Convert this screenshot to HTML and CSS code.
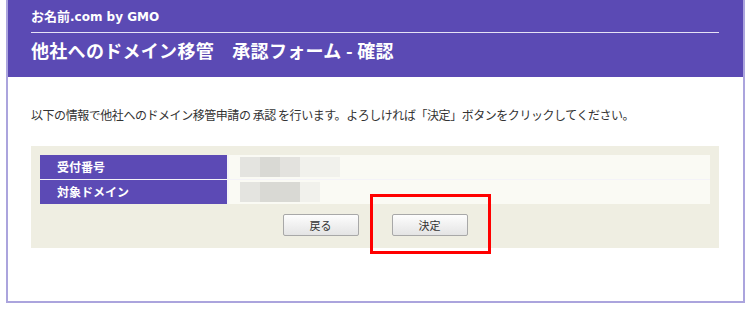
FILE: index.html
```html
<!DOCTYPE html>
<html lang="ja">
<head>
  <meta charset="UTF-8">
  <title>他社へのドメイン移管 承認フォーム - 確認</title>
  <link rel="stylesheet" href="styles.css">
</head>
<body>
  <div class="frame">
    <div class="header">
      <div class="brand">お名前<span class="latin">.com by GMO</span></div>
      <h1>他社へのドメイン移管　承認フォーム - 確認</h1>
    </div>

    <div class="content">
      <p class="lead">以下の情報で他社へのドメイン移管申請の 承認 を行います。よろしければ「決定」ボタンをクリックしてください。</p>

      <div class="box">
        <div class="rows">
          <div class="label">受付番号</div>
          <div class="value">
            <span class="px p1"></span><span class="px p2"></span><span class="px p3"></span><span class="px p4 wide"></span>
          </div>
          <div class="label">対象ドメイン</div>
          <div class="value">
            <span class="px p1"></span><span class="px p2 wide"></span><span class="px p4"></span>
          </div>
        </div>
        <div class="actions">
          <button class="btn">戻る</button>
          <div class="mark">
            <button class="btn">決定</button>
            <span class="highlight"></span>
          </div>
        </div>
      </div>
    </div>
  </div>
</body>
</html>
```

FILE: styles.css
```css
body {
  margin: 0;
  background: #fff;
  color: #333;
  font-family: "Noto Sans CJK JP", sans-serif;
}
.frame {
  margin: 0 5px 0 6px;
  height: 301px;
  border: 2px solid #aba4dd;
  border-top: 0;
}
.header {
  background: #5b4ab4;
  color: #fff;
  height: 77px;
  padding: 0 24px 0 23px;
  box-sizing: border-box;
}
.brand {
  font-size: 13px;
  font-weight: bold;
  line-height: 16px;
  padding-top: 8px;
  padding-bottom: 7px;
  border-bottom: 1px solid #e6e2f6;
}
.brand .latin { font-family: "DejaVu Sans", sans-serif; font-size: 12px; }
h1 {
  margin: 0;
  font-size: 18px;
  line-height: 24px;
  padding-top: 5px;
  letter-spacing: 0.3px;
}
.content { padding: 30px 24px 0 23px; }
.lead {
  margin: 0 0 23px;
  font-size: 12px;
  line-height: 16px;
  letter-spacing: -0.45px;
}
.box {
  background: #efeee2;
  padding: 9px 9px 12px;
}
.rows {
  display: grid;
  grid-template-columns: 187px 1fr;
  column-gap: 2px;
  row-gap: 1px;
  background: #f4f3f8;
}
.label {
  background: #5c4ab5;
  color: #fff;
  font-size: 12px;
  font-weight: bold;
  height: 24px;
  line-height: 24px;
  padding-left: 17px;
}
.value {
  background: #fafaf4;
  height: 24px;
  padding: 2px 0 0 11px;
  box-sizing: border-box;
  display: flex;
}
.px { width: 20px; height: 20px; }
.px.wide { width: 40px; }
.p1 { background: #e4e4e0; }
.p2 { background: #d9d9d4; }
.p3 { background: #e3e2de; }
.p4 { background: #f1f1ec; }
.actions {
  display: flex;
  justify-content: center;
  gap: 33px;
  margin-top: 10px;
}
.btn {
  display: block;
  width: 76px;
  height: 22px;
  border: 1px solid #a8a8a8;
  border-radius: 2px;
  background: linear-gradient(#fdfdfd, #e4e4e4);
  font-family: "Noto Sans CJK JP", sans-serif;
  font-size: 11px;
  color: #333;
  padding: 0;
}
.mark { position: relative; display: flex; }
.highlight {
  position: absolute;
  top: -20px;
  left: -22px;
  right: -23px;
  bottom: -18px;
  border: 3px solid #f00;
}
```
